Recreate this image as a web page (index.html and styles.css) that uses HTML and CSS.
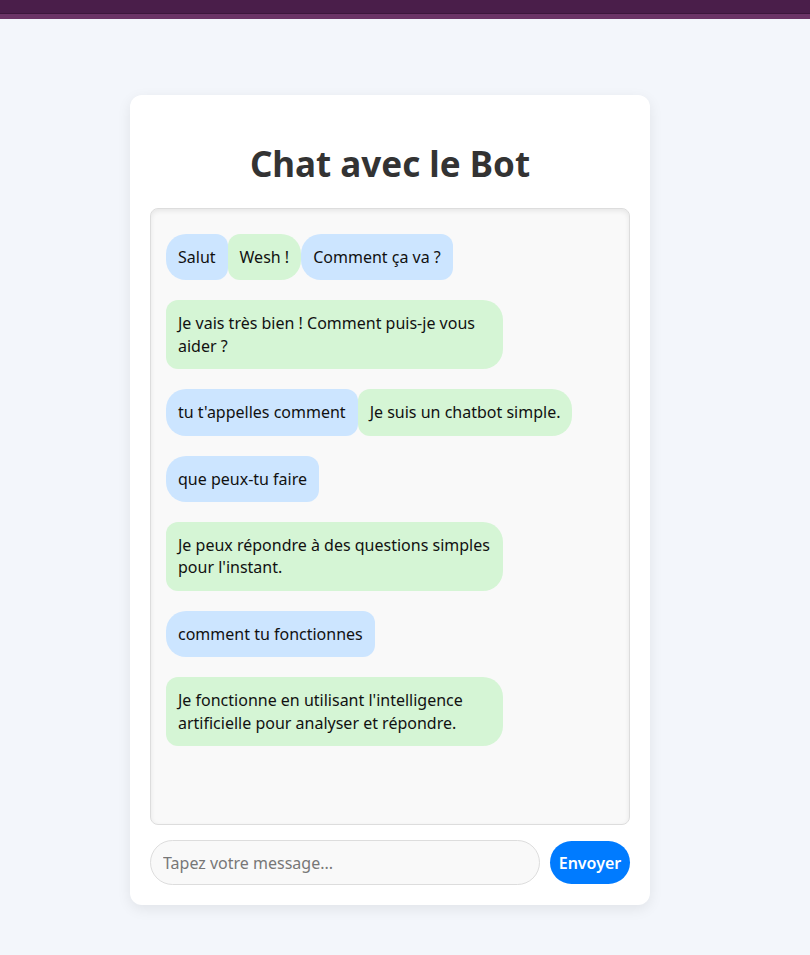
FILE: index.html
```html
<!DOCTYPE html>
<html lang="fr">
<head>
<meta charset="utf-8">
<title>Chat avec le Bot</title>
<link rel="stylesheet" href="styles.css">
</head>
<body>
<header class="topbar"></header>
<main class="page">
  <section class="card">
    <h1 class="title">Chat avec le Bot</h1>
    <div class="chatbox">
      <div class="msg user">Salut</div>
      <div class="msg bot">Wesh !</div>
      <div class="msg user">Comment ça va ?</div>
      <div class="msg bot">Je vais très bien ! Comment puis-je vous aider ?</div>
      <div class="msg user">tu t'appelles comment</div>
      <div class="msg bot">Je suis un chatbot simple.</div>
      <div class="msg user">que peux-tu faire</div>
      <div class="msg bot">Je peux répondre à des questions simples pour l'instant.</div>
      <div class="msg user">comment tu fonctionnes</div>
      <div class="msg bot">Je fonctionne en utilisant l'intelligence artificielle pour analyser et répondre.</div>
    </div>
    <form class="composer">
      <input class="field" type="text" placeholder="Tapez votre message...">
      <button class="send" type="button">Envoyer</button>
    </form>
  </section>
</main>
</body>
</html>
```
FILE: styles.css
```css
* { box-sizing: border-box; }
html, body { margin: 0; padding: 0; }
body {
  background: #f3f6fb;
  font-family: "Noto Sans", "Open Sans", sans-serif;
  color: #111;
  min-height: 955px;
}
.topbar {
  height: 19px;
  background: #4a1e4a;
  border-bottom: 5px solid #6b3466;
  box-shadow: inset 0 -1px 0 #3c173c;
}
.page {
  padding: 76px 0 0 130px;
}
.card {
  width: 520px;
  background: #fff;
  border-radius: 12px;
  padding: 20px;
  box-shadow: 0 4px 14px rgba(0, 0, 0, 0.08);
}
.title {
  margin: 25px 0 21px;
  text-align: center;
  font-size: 35px;
  font-weight: 700;
  color: #333;
}
.chatbox {
  height: 617px;
  border: 1px solid #ddd;
  border-radius: 8px;
  background: #f9f9f9;
  padding: 15px;
  overflow-y: auto;
  display: flex;
  flex-wrap: wrap;
  align-content: flex-start;
  align-items: flex-start;
  box-shadow: inset 0 2px 5px rgba(0, 0, 0, 0.08);
}
.msg {
  margin: 10px 0;
  padding: 12px;
  max-width: 337px;
  font-size: 16px;
  line-height: 1.4;
  color: #111;
}
.user {
  background: #cce5ff;
  border-radius: 20px 12px 12px 20px;
}
.bot {
  background: #d5f5d5;
  border-radius: 12px 20px 20px 12px;
}
.composer {
  display: flex;
  align-items: center;
  gap: 10px;
  margin-top: 15px;
}
.field {
  flex: 1;
  height: 45px;
  border: 1px solid #ddd;
  border-radius: 23px;
  background: #f9f9f9;
  padding: 0 12px;
  font-family: "Noto Sans", "Open Sans", sans-serif;
  font-size: 16px;
  color: #333;
  outline: none;
}
.field::placeholder { color: #777; }
.send {
  width: 80px;
  height: 43px;
  padding: 0;
  border: none;
  border-radius: 22px;
  background: #007bff;
  color: #fff;
  font-family: "Noto Sans", "Open Sans", sans-serif;
  font-size: 16px;
  font-weight: 600;
}
```
